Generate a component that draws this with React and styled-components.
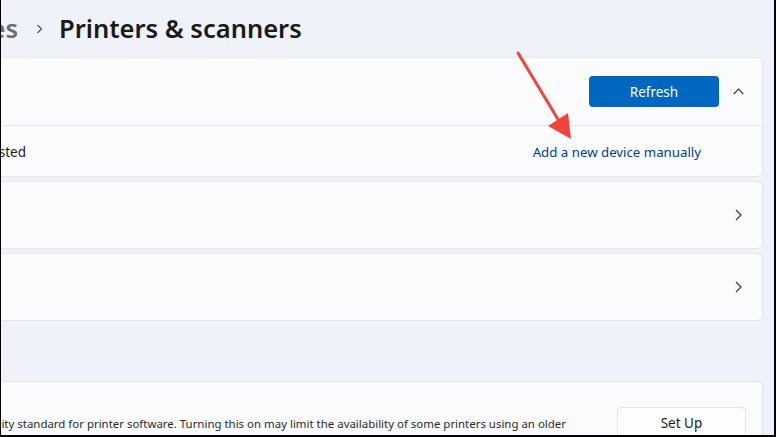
import React from "react";
import styled, { createGlobalStyle } from "styled-components";

const GlobalStyle = createGlobalStyle`
  html, body {
    margin: 0;
    padding: 0;
    background: #000;
  }
  body {
    font-family: "Noto Sans", "Open Sans", sans-serif;
  }
`;

const Frame = styled.div`
  position: relative;
  width: 776px;
  height: 437px;
  box-sizing: border-box;
  border-left: 1px solid #000;
  border-right: 2px solid #000;
  border-bottom: 2px solid #000;
  background: #eff3f9;
  overflow: hidden;
`;

const Column = styled.div`
  margin-left: -10px;
  width: 772px;
  display: flex;
  flex-direction: column;
`;

const Header = styled.div`
  height: 57px;
  display: flex;
  align-items: center;
  padding-bottom: 2px;
  box-sizing: border-box;
`;

const CrumbPrefix = styled.div`
  width: 27px;
  display: flex;
  justify-content: flex-end;
  white-space: nowrap;
  font-size: 25.5px;
  font-weight: 600;
  color: #6b6e72;
`;

const CrumbSep = styled.span`
  display: flex;
  align-items: center;
  margin: 2px 16px 0 18px;
  color: #5c5f63;
`;

const Title = styled.h1`
  margin: 0;
  font-size: 25.5px;
  font-weight: 600;
  color: #1a1a1a;
  white-space: nowrap;
`;

const Card = styled.div`
  background: #f9fbfd;
  border: 1px solid #e3e6ea;
  border-radius: 5px;
  margin-bottom: ${(p) => p.$gap || 4}px;
`;

const Row = styled.div`
  height: ${(p) => p.$h}px;
  display: flex;
  align-items: center;
  box-sizing: border-box;
  border-top: ${(p) => (p.$divider ? "1px solid #e3e6ea" : "none")};
`;

const Label = styled.div`
  width: ${(p) => p.$w}px;
  flex: none;
  display: flex;
  justify-content: flex-end;
  white-space: nowrap;
  font-size: ${(p) => p.$size || 13.5}px;
  color: ${(p) => p.$color || "#1b1b1b"};
  padding-top: ${(p) => p.$pt || 0}px;
`;

const Spacer = styled.div`
  flex: 1;
`;

const PrimaryButton = styled.button`
  width: 130px;
  height: 31px;
  border: none;
  border-radius: 4px;
  background: #0067c0;
  color: #fff;
  font-family: inherit;
  font-size: 13.5px;
  margin-right: 14px;
`;

const SecondaryButton = styled.button`
  width: 129px;
  height: 33px;
  border: 1px solid #e3e5e8;
  border-radius: 4px;
  background: #fdfdfe;
  color: #1b1b1b;
  font-family: inherit;
  font-size: 13.5px;
  margin-right: 16px;
`;

const IconBox = styled.span`
  width: 11px;
  display: flex;
  align-items: center;
  justify-content: center;
  margin-right: 18px;
`;

const LinkText = styled.a`
  font-size: 13.25px;
  color: #003f92;
  text-decoration: none;
  margin-right: 61px;
  padding-top: 2px;
  white-space: nowrap;
`;

const Arrow = styled.svg`
  position: absolute;
  left: 0;
  top: 0;
  pointer-events: none;
`;

const ChevronUp = () => (
  <svg width="11" height="7" viewBox="0 0 11 7">
    <path d="M0.8 6 L5.5 1.2 L10.2 6" fill="none" stroke="#3a3a3a" strokeWidth="1.2" />
  </svg>
);

const ChevronRight = () => (
  <svg width="7" height="12" viewBox="0 0 7 12">
    <path d="M1 1 L6 6 L1 11" fill="none" stroke="#3a3a3a" strokeWidth="1.2" />
  </svg>
);

const ChevronSmall = () => (
  <svg width="7" height="10" viewBox="0 0 7 10">
    <path d="M1.5 1 L5.5 5 L1.5 9" fill="none" stroke="#55585c" strokeWidth="1.3" />
  </svg>
);

export default function App() {
  return (
    <>
      <GlobalStyle />
      <Frame>
        <Column>
          <Header>
            <CrumbPrefix>Bluetooth &amp; devices</CrumbPrefix>
            <CrumbSep>
              <ChevronSmall />
            </CrumbSep>
            <Title>Printers &amp; scanners</Title>
          </Header>

          <Card>
            <Row $h={67}>
              <Spacer />
              <PrimaryButton>Refresh</PrimaryButton>
              <IconBox>
                <ChevronUp />
              </IconBox>
            </Row>
            <Row $h={51} $divider>
              <Label $w={34} $pt={2}>The printer that I want isn't listed</Label>
              <Spacer />
              <LinkText href="#">Add a new device manually</LinkText>
            </Row>
          </Card>

          <Card>
            <Row $h={66}>
              <Spacer />
              <IconBox>
                <ChevronRight />
              </IconBox>
            </Row>
          </Card>

          <Card $gap={60}>
            <Row $h={66}>
              <Spacer />
              <IconBox>
                <ChevronRight />
              </IconBox>
            </Row>
          </Card>

          <Card>
            <Row $h={82}>
              <Label $w={574} $size={11.45} $color="#2b2b2b">
                Windows protected print mode uses the Mopria print compatibility standard for printer
                software. Turning this on may limit the availability of some printers using an older
              </Label>
              <Spacer />
              <SecondaryButton>Set Up</SecondaryButton>
            </Row>
          </Card>
        </Column>

        <Arrow width="776" height="437" viewBox="0 0 776 437">
          <line x1="517" y1="53" x2="558" y2="121" stroke="#f2453a" strokeWidth="3" strokeLinecap="round" />
          <polygon points="570,139 547,126 567,113" fill="#f2453a" />
        </Arrow>
      </Frame>
    </>
  );
}
